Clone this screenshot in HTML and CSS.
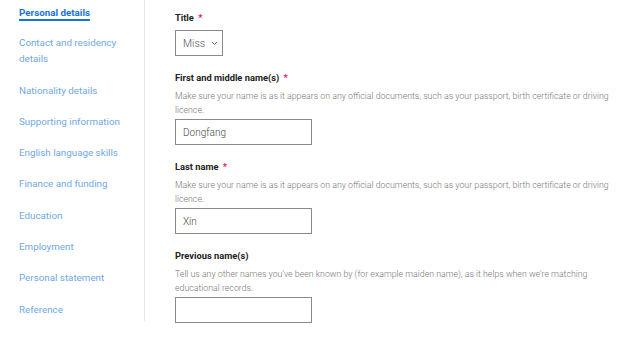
FILE: index.html
```html
<!DOCTYPE html>
<html>
<head>
<meta charset="utf-8">
<link rel="stylesheet" href="styles.css">
</head>
<body>
<div class="page">
  <nav class="side">
    <a class="nav-item active">Personal details</a>
    <a class="nav-item">Contact and residency details</a>
    <a class="nav-item">Nationality details</a>
    <a class="nav-item">Supporting information</a>
    <a class="nav-item">English language skills</a>
    <a class="nav-item">Finance and funding</a>
    <a class="nav-item">Education</a>
    <a class="nav-item">Employment</a>
    <a class="nav-item">Personal statement</a>
    <a class="nav-item">Reference</a>
  </nav>
  <main class="form">
    <div class="field">
      <label class="label">Title <span class="req">*</span></label>
      <div class="select">Miss <svg class="chev" width="7" height="5" viewBox="0 0 7 5"><path d="M1 1l2.5 2.5L6 1" fill="none" stroke="#666" stroke-width="1"/></svg></div>
    </div>
    <div class="field">
      <label class="label">First and middle name(s) <span class="req">*</span></label>
      <p class="hint">Make sure your name is as it appears on any official documents, such as your passport, birth certificate or driving licence.</p>
      <div class="input">Dongfang</div>
    </div>
    <div class="field">
      <label class="label">Last name <span class="req">*</span></label>
      <p class="hint">Make sure your name is as it appears on any official documents, such as your passport, birth certificate or driving licence.</p>
      <div class="input">Xin</div>
    </div>
    <div class="field">
      <label class="label">Previous name(s)</label>
      <p class="hint">Tell us any other names you've been known by (for example maiden name), as it helps when we're matching educational records.</p>
      <div class="input"></div>
    </div>
  </main>
</div>
</body>
</html>
```
FILE: styles.css
```css
* { box-sizing: border-box; }
html, body { margin: 0; padding: 0; background: #fff; }
body { font-family: Roboto, "Liberation Sans", sans-serif; }
.page { display: flex; align-items: flex-start; }
.side {
  width: 145px;
  height: 321px;
  border-right: 1px solid #e6e6e6;
  padding: 7px 8px 0 19px;
  display: flex;
  flex-direction: column;
  gap: 15.3px;
}
.nav-item {
  font-size: 9.8px;
  line-height: 16px;
  color: #6fa8e6;
  font-weight: 400;
}
.nav-item.active {
  color: #1a73d9;
  font-weight: 700;
  align-self: flex-start;
  border-bottom: 2px solid #1a73d9;
  line-height: 12px;
  margin-bottom: -1px;
}
.form {
  padding: 11px 0 0 30px;
  width: 475px;
  display: flex;
  flex-direction: column;
  gap: 15px;
}
.label {
  display: block;
  font-size: 9.3px;
  font-weight: 700;
  color: #222;
  line-height: 14px;
}
.req { color: #e0245e; margin-left: 2px; }
.hint {
  margin: 4px 0 2px;
  font-size: 8.8px;
  font-weight: 300;
  color: #777;
  line-height: 14px;
  width: 445px;
}
.select {
  margin-top: 5px;
  width: 48px;
  height: 26px;
  border: 1px solid #8a8a8a;
  display: flex;
  align-items: center;
  padding-left: 7px;
  font-size: 10.5px;
  font-weight: 300;
  color: #555;
  gap: 6px;
}
.input {
  width: 137px;
  height: 26px;
  border: 1px solid #8a8a8a;
  padding-left: 7px;
  display: flex;
  align-items: center;
  font-size: 10px;
  font-weight: 300;
  color: #444;
}
```
